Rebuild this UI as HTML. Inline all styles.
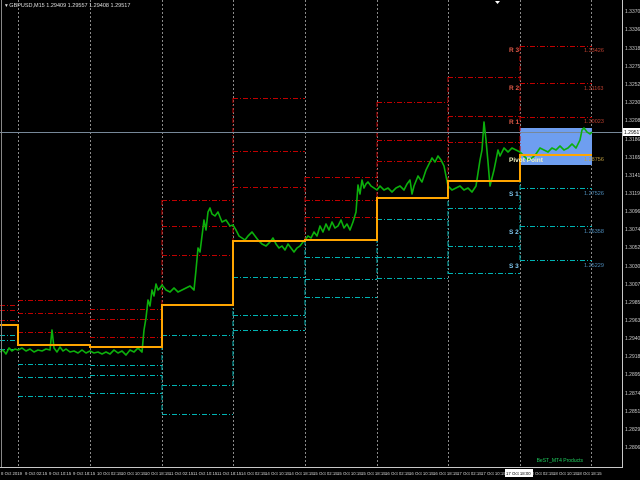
<!DOCTYPE html>
<html><head><meta charset="utf-8"><style>
html,body{margin:0;padding:0;background:#000;}
svg{display:block;}
text{font-family:"Liberation Sans",sans-serif;}
</style></head><body>
<svg width="640" height="480" viewBox="0 0 640 480" xmlns="http://www.w3.org/2000/svg">
<rect width="640" height="480" fill="#000"/>
<g stroke="#8a8a8a" stroke-width="1" stroke-dasharray="2,2">
<line x1="18.5" y1="0" x2="18.5" y2="467"/><line x1="90.5" y1="0" x2="90.5" y2="467"/>
<line x1="162.5" y1="0" x2="162.5" y2="467"/><line x1="233.5" y1="0" x2="233.5" y2="467"/>
<line x1="305.5" y1="0" x2="305.5" y2="467"/><line x1="377.5" y1="0" x2="377.5" y2="467"/>
<line x1="448.5" y1="0" x2="448.5" y2="467"/><line x1="520.5" y1="0" x2="520.5" y2="467"/>
<line x1="591.5" y1="0" x2="591.5" y2="467"/>
</g>
<rect x="520" y="128" width="72" height="37" fill="#6e9ef0"/>
<g stroke="#c00000" stroke-width="1" stroke-dasharray="5,2,1,2" fill="none">
<path d="M0 305.5H18M0 310.5H18M0 320.5H18"/>
<path d="M18 300.5H90M18 313.5H90M18 332.5H90"/>
<path d="M90 309.5H162M90 319.5H162M90 337.5H162"/>
<path d="M162 200.5H233M162 226.5H233M162 255.5H233"/>
<path d="M233 98.5H305M233 151.5H305M233 187.5H305"/>
<path d="M305 177.5H377M305 200.5H377M305 217.5H377"/>
<path d="M377 102.5H448M377 140.5H448M377 161.5H448"/>
<path d="M448 77.5H520M448 116.5H520M448 142.5H520"/>
<path d="M520 46.5H592M520 83.5H592M520 117.5H592"/>
<path d="M162 200V305M233 98V241M305 177V240M377 102V198M448 77V181M520 46V155"/>
</g>
<g stroke="#00b4b4" stroke-width="1" stroke-dasharray="5,2,1,2" fill="none">
<path d="M0 335.5H18M0 340.5H18M0 349.5H18"/>
<path d="M18 364.5H90M18 377.5H90M18 396.5H90"/>
<path d="M90 365.5H162M90 375.5H162M90 393.5H162"/>
<path d="M162 335.5H233M162 385.5H233M162 414.5H233"/>
<path d="M233 277.5H305M233 315.5H305M233 330.5H305"/>
<path d="M305 257.5H377M305 279.5H377M305 297.5H377"/>
<path d="M377 219.5H448M377 257.5H448M377 278.5H448"/>
<path d="M448 208.5H520M448 246.5H520M448 273.5H520"/>
<path d="M520 188.5H592M520 226.5H592M520 260.5H592"/>
<path d="M162 305V414M233 241V385M305 240V330M377 198V279M448 181V274M520 155V260"/>
</g>
<line x1="0" y1="132.5" x2="622" y2="132.5" stroke="#778899" stroke-width="1"/>
<polyline fill="none" stroke="#0cb00c" stroke-width="1.6" stroke-linejoin="round" points="0,352 3,350 6,354 9,348 12,351 15,349 18,350 22,348 26,351 30,349 34,352 38,350 42,351 46,349 50,350 52,330 54,348 57,352 60,347 63,351 66,349 70,352 74,351 78,353 82,350 86,353 90,351 94,353 98,352 102,354 106,352 110,354 114,350 118,353 122,351 126,355 130,350 134,352 138,348 142,352 144,330 146,318 148,300 150,306 152,290 154,296 156,284 158,290 160,288 162,285 166,290 170,292 174,288 178,292 182,290 186,288 190,286 194,290 196,270 198,248 200,252 202,236 204,220 206,230 208,212 210,208 212,214 215,216 218,212 222,222 226,220 230,226 233,225 236,230 239,236 242,238 245,240 248,236 252,232 255,236 258,240 262,244 266,246 270,242 273,238 276,244 279,248 282,246 285,250 288,244 291,248 294,252 297,248 300,246 303,242 305,240 308,236 311,238 314,232 317,236 320,226 323,232 326,224 329,230 332,222 335,228 338,226 341,220 344,228 347,224 350,230 353,222 356,212 358,185 360,194 362,180 364,188 366,184 368,182 371,186 374,188 377,190 380,186 384,190 388,188 392,192 396,188 400,186 404,190 407,184 410,180 412,194 414,186 418,176 422,182 426,170 429,164 432,158 435,162 438,156 441,160 444,166 448,186 452,190 456,188 460,186 464,190 468,188 472,192 476,186 480,160 482,150 484,122 486,140 488,162 490,186 492,178 494,170 496,160 498,150 500,156 504,148 508,152 512,148 516,150 520,152 524,156 528,160 532,158 536,154 540,148 544,150 548,152 552,148 556,150 560,146 564,150 568,148 572,144 576,148 580,140 582,130 584,128 587,132 590,134 592,132"/>
<path d="M0 325H18V345H90V347H162V305H233V241H305V240H377V198H448V181H520V155H592" fill="none" stroke="#ffa500" stroke-width="2"/>
<g font-size="6.5" font-weight="bold">
<text x="509" y="52" fill="#e05a48">R 3</text>
<text x="509" y="90" fill="#e05a48">R 2</text>
<text x="509" y="124" fill="#e05a48">R 1</text>
<text x="509" y="162" fill="#f4f4c0">Pivot Point</text>
<text x="509" y="196" fill="#80c8f0">S 1</text>
<text x="509" y="234" fill="#80c8f0">S 2</text>
<text x="509" y="268" fill="#80c8f0">S 3</text>
</g>
<g font-size="5.5">
<text x="584" y="52" fill="#c04030">1.33426</text>
<text x="584" y="90" fill="#c04030">1.31163</text>
<text x="584" y="123" fill="#c04030">1.30023</text>
<text x="584" y="161" fill="#c0a040">1.28756</text>
<text x="584" y="195" fill="#5090c0">1.27526</text>
<text x="584" y="233" fill="#5090c0">1.26358</text>
<text x="584" y="267" fill="#5090c0">1.25229</text>
</g>
<line x1="622.5" y1="0" x2="622.5" y2="468" stroke="#c8c8c8"/>
<line x1="0" y1="467.5" x2="623" y2="467.5" stroke="#c8c8c8"/>
<line x1="1.5" y1="0" x2="1.5" y2="467" stroke="#888"/>
<g font-size="5" fill="#d0d0d0">
<text x="625" y="13">1.33700</text><text x="625" y="31">1.33365</text><text x="625" y="50">1.33180</text>
<text x="625" y="68">1.32750</text><text x="625" y="86">1.32525</text><text x="625" y="104">1.32300</text>
<text x="625" y="122">1.32085</text><text x="625" y="141">1.31865</text><text x="625" y="159">1.31650</text>
<text x="625" y="177">1.31415</text><text x="625" y="195">1.31190</text><text x="625" y="213">1.30960</text>
<text x="625" y="231">1.30745</text><text x="625" y="249">1.30520</text><text x="625" y="268">1.30300</text>
<text x="625" y="286">1.30075</text><text x="625" y="304">1.29850</text><text x="625" y="322">1.29630</text>
<text x="625" y="340">1.29405</text><text x="625" y="358">1.29180</text><text x="625" y="376">1.28955</text>
<text x="625" y="395">1.28740</text><text x="625" y="413">1.28515</text><text x="625" y="431">1.28290</text>
<text x="625" y="449">1.28065</text>
</g>
<rect x="623" y="128" width="17" height="8" fill="#fff"/>
<text x="624" y="134" font-size="5" fill="#000">1.29517</text>
<g font-size="4.3" fill="#d0d0d0">
<text x="1" y="475">8 Oct 2019</text><text x="25" y="475">9 Oct 02:15</text><text x="49" y="475">9 Oct 10:15</text>
<text x="73" y="475">9 Oct 18:15</text><text x="97" y="475">10 Oct 02:15</text><text x="121" y="475">10 Oct 10:15</text>
<text x="145" y="475">10 Oct 18:15</text><text x="169" y="475">11 Oct 02:15</text><text x="193" y="475">11 Oct 10:15</text>
<text x="217" y="475">11 Oct 18:15</text><text x="241" y="475">14 Oct 02:15</text><text x="265" y="475">14 Oct 10:15</text>
<text x="289" y="475">14 Oct 18:15</text><text x="313" y="475">15 Oct 02:15</text><text x="337" y="475">15 Oct 10:15</text>
<text x="361" y="475">15 Oct 18:15</text><text x="385" y="475">16 Oct 02:15</text><text x="409" y="475">16 Oct 10:15</text>
<text x="433" y="475">16 Oct 18:15</text><text x="457" y="475">17 Oct 02:15</text><text x="481" y="475">17 Oct 10:15</text>
<text x="529" y="475">18 Oct 02:15</text><text x="553" y="475">18 Oct 10:15</text><text x="577" y="475">18 Oct 18:15</text>
</g>
<rect x="505" y="469" width="28" height="8" fill="#fff"/>
<text x="506" y="475" font-size="4.3" fill="#000">17 Oct 18:00</text>
<text x="5" y="7" font-size="5.5" fill="#e0e0e0">▾ GBPUSD,M15 1.29409 1.29557 1.29408 1.29517</text>
<path d="M495 1L500 1L497.5 4Z" fill="#fff"/>
<text x="583" y="462" font-size="5" fill="#20d060" text-anchor="end">BeST_MT4 Products</text>
</svg>
</body></html>
